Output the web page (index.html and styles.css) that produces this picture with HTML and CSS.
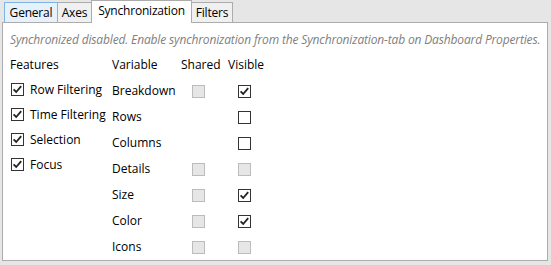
FILE: index.html
```html
<!DOCTYPE html>
<html lang="en">
<head>
    <meta charset="UTF-8">
    <title>Synchronization</title>
    <link rel="stylesheet" href="styles.css">
</head>
<body>
    <div class="tab-strip">
        <div class="tab tab-hover tab-general">General</div>
        <div class="tab tab-axes">Axes</div>
        <div class="tab tab-selected tab-sync">Synchronization</div>
        <div class="tab tab-filters">Filters</div>
    </div>

    <div class="tab-panel">
        <div class="info-text">Synchronized disabled. Enable synchronization from the Synchronization-tab on Dashboard Properties.</div>

        <div class="sync-body">
            <div class="features">
                <div class="col-header">Features</div>
                <div class="feature-row"><span class="check checked"></span>Row Filtering</div>
                <div class="feature-row"><span class="check checked"></span>Time Filtering</div>
                <div class="feature-row"><span class="check checked"></span>Selection</div>
                <div class="feature-row"><span class="check checked"></span>Focus</div>
            </div>

            <div class="variables">
                <div class="col-header">Variable</div>
                <div class="col-header">Shared</div>
                <div class="col-header">Visible</div>

                <div class="var-name">Breakdown</div>
                <div class="cell shared"><span class="check disabled"></span></div>
                <div class="cell visible"><span class="check checked"></span></div>

                <div class="var-name">Rows</div>
                <div class="cell shared"></div>
                <div class="cell visible"><span class="check"></span></div>

                <div class="var-name">Columns</div>
                <div class="cell shared"></div>
                <div class="cell visible"><span class="check"></span></div>

                <div class="var-name">Details</div>
                <div class="cell shared"><span class="check disabled"></span></div>
                <div class="cell visible"><span class="check disabled"></span></div>

                <div class="var-name">Size</div>
                <div class="cell shared"><span class="check disabled"></span></div>
                <div class="cell visible"><span class="check checked"></span></div>

                <div class="var-name">Color</div>
                <div class="cell shared"><span class="check disabled"></span></div>
                <div class="cell visible"><span class="check checked"></span></div>

                <div class="var-name">Icons</div>
                <div class="cell shared"><span class="check disabled"></span></div>
                <div class="cell visible"><span class="check disabled"></span></div>
            </div>
        </div>
    </div>
</body>
</html>
```

FILE: styles.css
```css
body {
    margin: 0;
    padding: 0;
    background-color: #e6e6e6;
    font-family: "Open Sans", "Noto Sans", sans-serif;
    font-size: 12px;
    color: #000;
    width: 551px;
    height: 265px;
    overflow: hidden;
}

.tab-strip {
    display: flex;
    align-items: flex-end;
    height: 22px;
    padding-left: 4px;
}

.tab {
    box-sizing: border-box;
    height: 20px;
    line-height: 19px;
    text-align: center;
    background-color: #f0f0f0;
    border: 1px solid #acacac;
    border-bottom: none;
    margin-right: -1px;
    letter-spacing: -0.2px;
    white-space: nowrap;
}

.tab-general {
    width: 54px;
}

.tab-axes {
    width: 35px;
}

.tab-sync {
    width: 101px;
}

.tab-filters {
    width: 42px;
}

.tab-hover {
    background-color: #e5f1fb;
    border-color: #7eb4ea;
    position: relative;
    z-index: 1;
}

.tab-selected {
    height: 23px;
    line-height: 20px;
    background-color: #fff;
    position: relative;
    z-index: 2;
    top: 1px;
}

.tab-panel {
    margin: 0 3px 0 2px;
    height: 239px;
    background-color: #fff;
    border: 1px solid #acacac;
    padding: 9px 0 0 7px;
    box-sizing: border-box;
}

.info-text {
    font-style: italic;
    color: #808080;
    line-height: 16px;
    height: 16px;
    white-space: nowrap;
    letter-spacing: -0.15px;
}

.sync-body {
    display: flex;
    margin-top: 4px;
}

.features {
    width: 102px;
}

.features .col-header {
    height: 25px;
    line-height: 25px;
}

.feature-row {
    display: flex;
    align-items: center;
    height: 25px;
}

.feature-row .check {
    margin: 0 6px 0 1px;
}

.variables {
    display: grid;
    grid-template-columns: 69px 47px 47px;
    grid-auto-rows: 26px;
}

.col-header,
.var-name {
    line-height: 26px;
    white-space: nowrap;
}

.cell {
    display: flex;
    align-items: center;
}

.cell.shared {
    padding-left: 11px;
}

.cell.visible {
    padding-left: 10px;
}

.check {
    display: inline-block;
    width: 13px;
    height: 13px;
    box-sizing: border-box;
    border: 1px solid #333;
    background-color: #fff;
    flex-shrink: 0;
}

.check.checked {
    background-image: url("data:image/svg+xml;utf8,<svg xmlns='http://www.w3.org/2000/svg' width='11' height='11' viewBox='0 0 11 11'><path d='M1.6 5.4 L4.2 8 L9.2 2.2' fill='none' stroke='%23222' stroke-width='1.8'/></svg>");
    background-repeat: no-repeat;
}

.check.disabled {
    background-color: #e6e6e6;
    border-color: #bcbcbc;
}
```
